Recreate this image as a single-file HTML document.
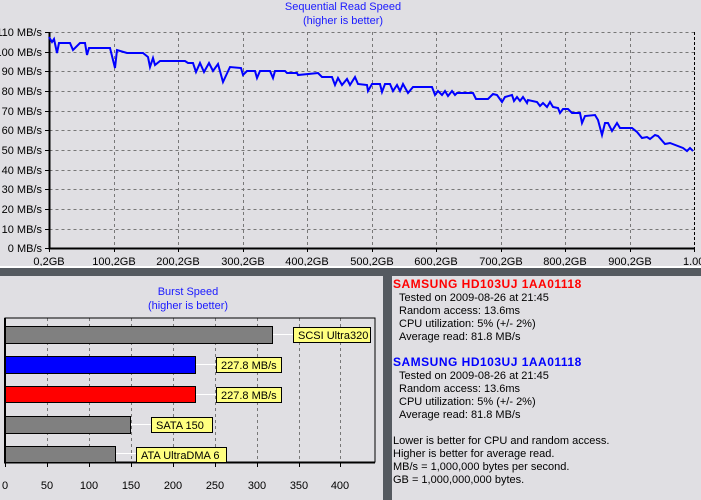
<!DOCTYPE html>
<html><head><meta charset="utf-8"><style>
html,body{margin:0;padding:0;background:#e0dfe3;}
svg{display:block;font-family:"Liberation Sans",sans-serif;font-size:11px;}
</style></head><body>
<svg width="701" height="500" viewBox="0 0 701 500" xmlns="http://www.w3.org/2000/svg">
<rect width="701" height="500" fill="#e0dfe3"/>
<text x="343" y="10" text-anchor="middle" fill="#1a1aff">Sequential Read Speed</text>
<text x="343" y="24" text-anchor="middle" fill="#1a1aff">(higher is better)</text>
<g stroke="#777" stroke-dasharray="3,3" stroke-width="1">
<path d="M49.5 32.5H694.5M49.5 52.5H694.5M49.5 71.5H694.5M49.5 91.5H694.5M49.5 111.5H694.5M49.5 130.5H694.5M49.5 150.5H694.5M49.5 170.5H694.5M49.5 189.5H694.5M49.5 209.5H694.5M49.5 229.5H694.5"/>
<path d="M114.5 32V248M178.5 32V248M243.5 32V248M307.5 32V248M372.5 32V248M436.5 32V248M501.5 32V248M565.5 32V248M630.5 32V248"/>
</g>
<path d="M694.5 32V248" stroke="#000" stroke-dasharray="3,2"/>
<path d="M49.5 32V248.5H694" stroke="#000" stroke-width="2" fill="none"/>
<g stroke="#000"><path d="M45 32.5h4M45 52.5h4M45 71.5h4M45 91.5h4M45 111.5h4M45 130.5h4M45 150.5h4M45 170.5h4M45 189.5h4M45 209.5h4M45 229.5h4M45 248.5h4"/>
<path d="M49.5 248v4M114.5 248v4M178.5 248v4M243.5 248v4M307.5 248v4M372.5 248v4M436.5 248v4M501.5 248v4M565.5 248v4M630.5 248v4M694.5 248v4"/></g>
<g text-anchor="end" fill="#000">
<text x="42" y="36">110 MB/s</text><text x="42" y="56">100 MB/s</text><text x="42" y="75">90 MB/s</text><text x="42" y="95">80 MB/s</text><text x="42" y="115">70 MB/s</text><text x="42" y="134">60 MB/s</text><text x="42" y="154">50 MB/s</text><text x="42" y="174">40 MB/s</text><text x="42" y="193">30 MB/s</text><text x="42" y="213">20 MB/s</text><text x="42" y="233">10 MB/s</text><text x="42" y="252">0 MB/s</text>
</g>
<g text-anchor="middle" fill="#000">
<text x="49" y="265">0,2GB</text><text x="114" y="265">100,2GB</text><text x="178" y="265">200,2GB</text><text x="243" y="265">300,2GB</text><text x="307" y="265">400,2GB</text><text x="372" y="265">500,2GB</text><text x="436" y="265">600,2GB</text><text x="501" y="265">700,2GB</text><text x="565" y="265">800,2GB</text><text x="630" y="265">900,2GB</text><text x="683" y="265" text-anchor="start">1.000,2</text>
</g>
<polyline fill="none" stroke="#0000ff" stroke-width="2" points="49,37 52,42 54,39 57,53 59,43 70,43 73,50 80,43 85,43 87,55 89,48 110,48 115,68 117,50 127,53 143,53 148,57 150,67 153,58 155,65 160,61 185,61 188,63 193,63 196,72 200,63 204,72 209,63 213,71 218,64 223,82 230,67 241,68 243,75 247,71 255,71 257,78 260,71 270,71 273,78 275,71 285,71 287,73 297,73 298,75 318,73 322,77 332,77 335,85 338,78 342,85 347,79 350,85 355,77 358,84 367,85 368,91 372,84 380,84 382,92 385,84 390,84 393,91 397,85 400,91 403,84 408,93 413,87 432,87 435,95 438,91 442,95 445,91 448,96 452,91 455,95 457,93 473,93 476,99 488,99 493,94 497,95 502,102 505,97 512,95 514,101 517,97 520,101 523,97 527,103 528,100 537,102 540,106 543,103 547,107 550,102 553,107 558,108 560,113 563,109 568,109 572,113 580,113 582,123 585,116 595,115 598,120 602,135 605,123 608,123 612,131 617,123 620,128 632,128 637,132 642,138 647,137 650,139 655,135 658,136 665,144 670,143 683,148 687,151 690,148 693,151"/>
<rect x="0" y="266" width="701" height="2" fill="#fff"/>
<rect x="0" y="268" width="701" height="8" fill="#555a60"/>
<rect x="383" y="276" width="9" height="224" fill="#555a60"/>
<text x="188" y="295" text-anchor="middle" fill="#1a1aff">Burst Speed</text>
<text x="188" y="309" text-anchor="middle" fill="#1a1aff">(higher is better)</text>
<g stroke="#777" stroke-dasharray="3,3"><path d="M47.5 318V462M89.5 318V462M131.5 318V462M173.5 318V462M215.5 318V462M257.5 318V462M299.5 318V462M340.5 318V462"/></g>
<rect x="5" y="318" width="370" height="144" fill="none" stroke="#000"/>
<path d="M5 318V462.5H375" stroke="#000" stroke-width="2" fill="none"/>
<g stroke="#000"><path d="M5.5 462v5M47.5 462v5M89.5 462v5M131.5 462v5M173.5 462v5M215.5 462v5M257.5 462v5M299.5 462v5M340.5 462v5"/></g>
<g stroke="#fff"><path d="M272 334.5H293M195 364.5H216M195 394.5H216M130 424.5H151M115 453.5H136"/></g>
<rect x="5.5" y="326.5" width="267" height="17" fill="#808080" stroke="#000"/>
<rect x="5.5" y="356.5" width="190" height="17" fill="#0000ff" stroke="#000"/>
<rect x="5.5" y="386.5" width="190" height="16" fill="#ff0000" stroke="#000"/>
<rect x="5.5" y="416.5" width="125" height="17" fill="#808080" stroke="#000"/>
<rect x="5.5" y="446.5" width="110" height="16" fill="#808080" stroke="#000"/>
<g fill="#ffff80" stroke="#000"><rect x="293.5" y="327.5" width="77" height="15"/><rect x="216.5" y="357.5" width="65" height="15"/><rect x="216.5" y="387.5" width="65" height="15"/><rect x="151.5" y="417.5" width="61" height="15"/><rect x="136.5" y="447.5" width="90" height="15"/></g>
<g fill="#000"><text x="298" y="339">SCSI Ultra320</text><text x="221" y="369">227.8 MB/s</text><text x="221" y="399">227.8 MB/s</text><text x="156" y="429">SATA 150</text><text x="141" y="459">ATA UltraDMA 6</text></g>
<g text-anchor="middle" fill="#000"><text x="5" y="489">0</text><text x="47" y="489">50</text><text x="89" y="489">100</text><text x="131" y="489">150</text><text x="173" y="489">200</text><text x="215" y="489">250</text><text x="257" y="489">300</text><text x="299" y="489">350</text><text x="340" y="489">400</text></g>
<text x="393" y="288" fill="#ff0000" font-weight="bold" font-size="12" letter-spacing="0.5">SAMSUNG HD103UJ 1AA01118</text>
<g fill="#000"><text x="399" y="301">Tested on 2009-08-26 at 21:45</text><text x="399" y="314">Random access: 13.6ms</text><text x="399" y="327">CPU utilization: 5% (+/- 2%)</text><text x="399" y="340">Average read: 81.8 MB/s</text></g>
<text x="393" y="366" fill="#0000ff" font-weight="bold" font-size="12" letter-spacing="0.5">SAMSUNG HD103UJ 1AA01118</text>
<g fill="#000"><text x="399" y="379">Tested on 2009-08-26 at 21:45</text><text x="399" y="392">Random access: 13.6ms</text><text x="399" y="405">CPU utilization: 5% (+/- 2%)</text><text x="399" y="418">Average read: 81.8 MB/s</text>
<text x="393" y="444">Lower is better for CPU and random access.</text><text x="393" y="457">Higher is better for average read.</text><text x="393" y="470">MB/s = 1,000,000 bytes per second.</text><text x="393" y="483">GB = 1,000,000,000 bytes.</text></g>
</svg>
</body></html>
